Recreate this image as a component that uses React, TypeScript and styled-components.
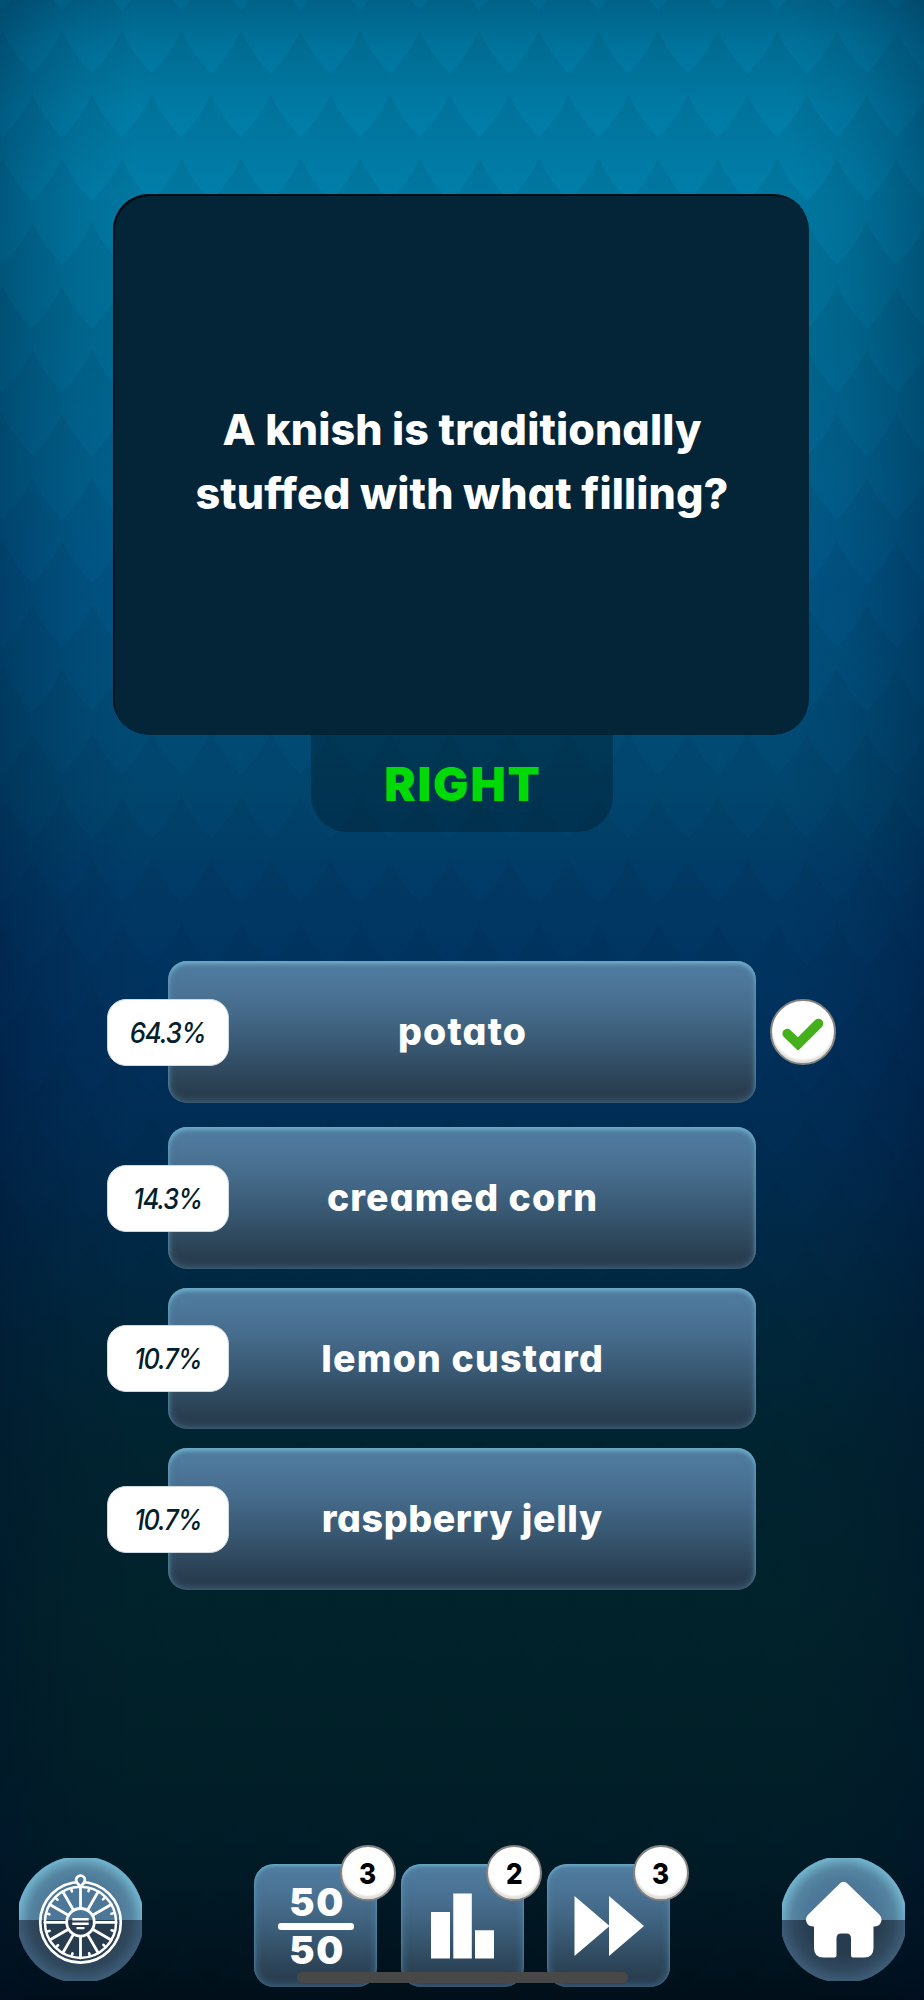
import React from "react";
import styled, { createGlobalStyle } from "styled-components";

const GlobalStyle = createGlobalStyle`
  *, *::before, *::after { box-sizing: border-box; }
  html, body { margin: 0; padding: 0; background: #001019; }
  body { font-family: Inter, "Open Sans", sans-serif; font-feature-settings: "cv11" 1; }
`;

const Screen = styled.main`
  position: relative;
  isolation: isolate;
  width: 924px;
  height: 2000px;
  overflow: hidden;
  display: flex;
  flex-direction: column;
  align-items: center;
  background: linear-gradient(
    180deg,
    #016890 0, #00769f 45px, #007ea9 110px, #0080ab 190px, #00719a 330px, #006491 480px,
    #00588a 580px, #00507c 700px, #004770 800px, #003d6a 870px, #003563 960px, #00305c 1060px,
    #002d54 1150px, #002a49 1230px, #00273c 1330px, #002430 1450px, #00232b 1600px,
    #002028 1740px, #001c27 1850px, #00141f 1950px, #000e18 2000px
  );
`;

const Scales = styled.svg`
  position: absolute;
  inset: 0;
  z-index: -2;
`;

const Vignette = styled.div`
  position: absolute;
  inset: 0;
  z-index: -1;
  background: linear-gradient(
    90deg,
    rgba(0, 14, 44, 0.29) 0, rgba(0, 14, 44, 0.18) 35px, rgba(0, 14, 44, 0.08) 75px, transparent 135px,
    transparent 789px, rgba(0, 14, 44, 0.08) 849px, rgba(0, 14, 44, 0.18) 889px, rgba(0, 14, 44, 0.29) 924px
  );
`;

const QuestionCard = styled.section`
  width: 696px;
  height: 541px;
  margin: 194px 2px 0 0;
  padding-bottom: 6px;
  display: flex;
  align-items: center;
  justify-content: center;
  border-radius: 36px;
  background: #042437;
  box-shadow: inset 1.5px 2px 0 #000c13;
`;

const Question = styled.h1`
  margin: 0 -2px 0 0;
  color: #fff;
  font-size: 43px;
  font-weight: 800;
  line-height: 63.5px;
  text-align: center;
`;

const Line = styled.span<{ $spacing: number }>`
  display: block;
  letter-spacing: ${(p) => p.$spacing}px;
  margin-right: ${(p) => -p.$spacing}px;
  white-space: nowrap;
`;

const Verdict = styled.div`
  width: 302px;
  height: 97px;
  display: flex;
  align-items: center;
  justify-content: center;
  border-radius: 0 0 36px 36px;
  background: rgba(0, 20, 30, 0.34);
  color: #02da08;
  font-size: 47px;
  font-weight: 900;
`;

const Answers = styled.div`
  width: 588px;
  margin-top: 129px;
  display: flex;
  flex-direction: column;
  gap: 19px;
`;

const AnswerButton = styled.div<{ $correct?: boolean }>`
  position: relative;
  height: 141.5px;
  margin-bottom: ${(p) => (p.$correct ? 5.5 : 0)}px;
  display: flex;
  align-items: center;
  justify-content: center;
  border-radius: 19px;
  background: linear-gradient(180deg, #4f7a9e 8%, #476d8e 32%, #395974 58%, #2e475b 80%, #293d50 92%);
  box-shadow:
    inset 0 3px 4px rgba(119, 193, 216, 0.7),
    inset 0 0 9px rgba(105, 160, 190, 0.5);
  color: #fff;
  font-size: 37.5px;
  font-weight: 800;
`;

const Share = styled.span`
  position: absolute;
  left: -61.5px;
  top: 37.5px;
  width: 122px;
  height: 67px;
  display: flex;
  align-items: center;
  justify-content: center;
  border-radius: 19px;
  border: 1px solid #cfd9e3;
  background: #fff;
  color: #04202b;
  font-size: 28.5px;
  font-weight: 500;
  font-style: italic;
`;

const Squeeze = styled.span<{ $x: number }>`
  display: block;
  letter-spacing: -1.3px;
  transform: scaleX(${(p) => p.$x});
`;

const Disc = styled.span<{ $size: number }>`
  position: absolute;
  width: ${(p) => p.$size}px;
  height: ${(p) => p.$size}px;
  display: flex;
  align-items: center;
  justify-content: center;
  border-radius: 50%;
  border: 2.5px solid #858280;
  background: #fff;
  box-shadow: inset 0 -3px 2px #dfe1dc;
`;

const CheckDisc = styled(Disc)`
  left: 602px;
  top: 38px;
`;

const CountDisc = styled(Disc)`
  left: 85.5px;
  top: -19px;
  color: #000;
  font-size: 29px;
  font-weight: 800;
`;

const CountValue = styled.span`
  transform: scaleX(0.9);
`;

const Footer = styled.footer`
  width: 100%;
  height: 142px;
  margin-top: auto;
  padding: 0 19px;
  display: flex;
  justify-content: space-between;
`;

const RoundButton = styled.div`
  display: flex;
  width: 123px;
  height: 123px;
  clip-path: circle(63.5px at 50% 50%);
  background:
    radial-gradient(circle at 61.5px 61.5px, transparent 34px, rgba(112, 180, 205, 0.4) 51px, #6fb0ca 62px) top / 100% 62px no-repeat,
    radial-gradient(circle at 61.5px 61.5px, transparent 34px, rgba(58, 86, 110, 0.5) 51px, #3c5b76 62px),
    linear-gradient(#4c7799 62px, #273c4f 62px);
`;

const Lifelines = styled.div`
  display: flex;
  gap: 23.5px;
  padding-top: 6px;
`;

const Lifeline = styled.div`
  position: relative;
  width: 123px;
  height: 123px;
  display: flex;
  flex-direction: column;
  align-items: center;
  border-radius: 20px;
  background: linear-gradient(180deg, #4f7b9e 6%, #476d8d 32%, #385871 60%, #2e475b 80%, #293d50 94%);
  box-shadow:
    inset 0 2px 3px rgba(119, 193, 216, 0.6),
    inset 0 0 10px rgba(88, 150, 192, 0.6);
  color: #fff;
`;

const Half = styled.span`
  height: 29px;
  line-height: 28px;
  font-size: 38px;
  font-weight: 900;
  letter-spacing: 1.5px;
  margin-right: -3px;

  &:first-child {
    margin-top: 23.5px;
  }
`;

const HalfRule = styled.span`
  width: 76px;
  height: 7px;
  margin: 6px 0;
  border-radius: 3px;
  background: #fff;
`;

const HomeIndicator = styled.div`
  position: absolute;
  left: 297px;
  bottom: 17px;
  width: 331px;
  height: 11px;
  border-radius: 6px;
  background: #484848;
`;

const PERIOD = 59.6;
const PITCH = 63.75;
const SPIKE = 42.5;

/* Zigzag edge of one row of scales, drawn left to right or back. */
function edge(x0: number, y: number, count: number, dir: 1 | -1) {
  const start = dir === 1 ? x0 : x0 + count * PERIOD;
  let d = "";
  for (let i = 0; i < count; i++) {
    const x = start + dir * i * PERIOD;
    const tip = x + (dir * PERIOD) / 2;
    const end = x + dir * PERIOD;
    d += ` Q${x + dir * 11} ${y + 23.5} ${tip} ${y + SPIKE} Q${end - dir * 11} ${y + 23.5} ${end} ${y}`;
  }
  return d;
}

function ScaleBackdrop() {
  const rows = Array.from({ length: 32 }, (_, i) => i - 1);
  return (
    <Scales width="924" height="2000" viewBox="0 0 924 2000">
      <defs>
        <linearGradient id="row" x1="0" y1="0" x2="0" y2="1">
          <stop offset="0" stopColor="#001c30" stopOpacity="0.13" />
          <stop offset="0.45" stopColor="#001c30" stopOpacity="0.07" />
          <stop offset="1" stopColor="#001c30" stopOpacity="0" />
        </linearGradient>
      </defs>
      {rows.map((r) => {
        const y = 31 + r * PITCH;
        const even = Math.abs(r) % 2 === 0;
        const top = even ? 2.6 - PERIOD : 2.6 - PERIOD * 1.5;
        const low = even ? 2.6 - PERIOD * 1.5 : 2.6 - PERIOD;
        const yl = y + PITCH;
        return (
          <path
            key={r}
            fill="url(#row)"
            d={`M${top} ${y} ${edge(top, y, 18, 1)} L${low + 18 * PERIOD} ${yl} ${edge(low, yl, 18, -1)} Z`}
          />
        );
      })}
    </Scales>
  );
}

function WheelIcon() {
  const spokes = Array.from({ length: 12 }, (_, i) => i * 30);
  return (
    <svg width="123" height="123" viewBox="0 0 123 123" fill="none" stroke="#fff" strokeLinecap="round">
      <circle cx="61.5" cy="64.3" r="40.3" strokeWidth="2.7" />
      <circle cx="61.5" cy="64.3" r="35.6" strokeWidth="2.5" />
      {spokes.map((a) => (
        <g key={a} transform={`rotate(${a} 61.5 64.3)`}>
          <path d="M61.5 50.3V28.8" strokeWidth="2.8" />
          <path d="M70 31.500l-.5 1.700" strokeWidth="2.6" />
        </g>
      ))}
      <circle cx="61.5" cy="64.3" r="13.8" strokeWidth="2.8" />
      <path d="M54.500 61.300h14M54.500 65.700h14M58.700 70.100h5.600" strokeWidth="2.4" strokeLinecap="square" />
      <path
        d="M61.500 28.500C59 26 57.100 24.600 57.100 22a4.400 4.400 0 0 1 8.800 0C65.900 24.600 64 26 61.500 28.500Z"
        fill="#4a7596"
        strokeWidth="2.8"
      />
    </svg>
  );
}

function HomeIcon() {
  return (
    <svg width="123" height="123" viewBox="0 0 123 123">
      <path
        fill="#fff"
        d="M57.3 26Q61.5 21.5 65.9 26L97.5 56.8Q101 61 98.5 65.3Q96.500 68.700 91.500 68.500V90Q91.500 99.500 82 99.500H71Q69 99.500 69 97.500V80.500Q69 75.500 64.500 75.500H59Q54.500 75.500 54.500 80.500V97.500Q54.500 99.500 52.500 99.500H41.500Q32 99.500 32 90V68.500Q27 68.700 25 65.300Q22.500 61 26 56.800Z"
      />
    </svg>
  );
}

const answers = [
  { label: "potato", share: "64.3%", squeeze: 0.91, correct: true, spacing: 1.2 },
  { label: "creamed corn", share: "14.3%", squeeze: 0.89, spacing: 1.1 },
  { label: "lemon custard", share: "10.7%", squeeze: 0.89, spacing: 1.2 },
  { label: "raspberry jelly", share: "10.7%", squeeze: 0.89, spacing: 0.6 },
];

export default function App() {
  return (
    <>
      <GlobalStyle />
      <Screen>
        <ScaleBackdrop />
        <Vignette />
        <QuestionCard>
          <Question>
            <Line $spacing={0.1}>A knish is traditionally</Line>
            <Line $spacing={0.1}>stuffed with what filling?</Line>
          </Question>
        </QuestionCard>
        <Verdict>
          <Line $spacing={1.9}>RIGHT</Line>
        </Verdict>
        <Answers>
          {answers.map((a) => (
            <AnswerButton key={a.label} $correct={a.correct}>
              <Share>
                <Squeeze $x={a.squeeze}>{a.share}</Squeeze>
              </Share>
              <Line $spacing={a.spacing}>{a.label}</Line>
              {a.correct && (
                <CheckDisc $size={66}>
                  <svg width="42" height="36" viewBox="0 0 42 36" fill="none">
                    <path d="M5.200 19.600L16 30L36.500 9.500" stroke="#44b01c" strokeWidth="9.600" strokeLinecap="round" />
                  </svg>
                </CheckDisc>
              )}
            </AnswerButton>
          ))}
        </Answers>
        <Footer>
          <RoundButton>
            <WheelIcon />
          </RoundButton>
          <Lifelines>
            <Lifeline>
              <Half>50</Half>
              <HalfRule />
              <Half>50</Half>
              <CountDisc $size={56}>
                <CountValue>3</CountValue>
              </CountDisc>
            </Lifeline>
            <Lifeline>
              <svg width="123" height="123" viewBox="0 0 123 123" fill="#fff">
                <path d="M30 48h19v46.500H30zM52.300 29.500h18.500v65H52.300zM74 66.300h19v28.200H74z" />
              </svg>
              <CountDisc $size={56}>
                <CountValue>2</CountValue>
              </CountDisc>
            </Lifeline>
            <Lifeline>
              <svg width="123" height="123" viewBox="0 0 123 123" fill="#fff">
                <path d="M27.500 32L62 61.500V32L97 62L62 92V62.500L27.500 92z" />
              </svg>
              <CountDisc $size={56}>
                <CountValue>3</CountValue>
              </CountDisc>
            </Lifeline>
          </Lifelines>
          <RoundButton>
            <HomeIcon />
          </RoundButton>
        </Footer>
        <HomeIndicator />
      </Screen>
    </>
  );
}
